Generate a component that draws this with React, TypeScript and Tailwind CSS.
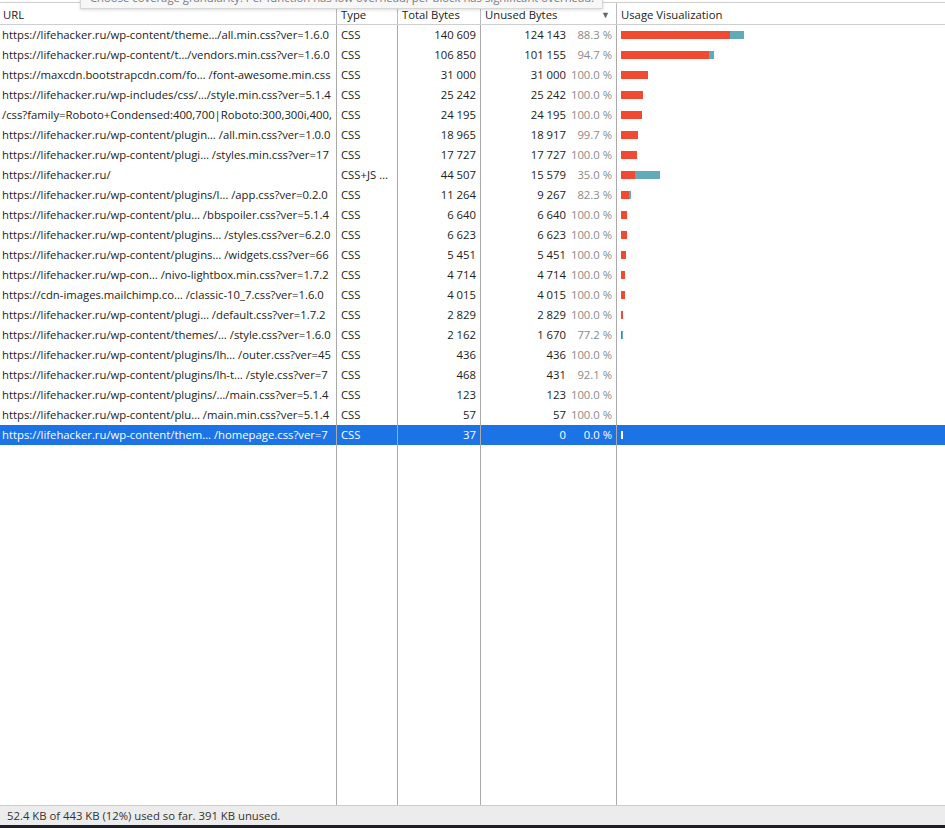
import React from "react";

type Row = { url: string; type: string; total: number; unused: number; pct: string };

const rows: Row[] = [
  { url: "https://lifehacker.ru/wp-content/theme…/all.min.css?ver=1.6.0", type: "CSS", total: 140609, unused: 124143, pct: "88.3 %" },
  { url: "https://lifehacker.ru/wp-content/t…/vendors.min.css?ver=1.6.0", type: "CSS", total: 106850, unused: 101155, pct: "94.7 %" },
  { url: "https://maxcdn.bootstrapcdn.com/fo… /font-awesome.min.css", type: "CSS", total: 31000, unused: 31000, pct: "100.0 %" },
  { url: "https://lifehacker.ru/wp-includes/css/…/style.min.css?ver=5.1.4", type: "CSS", total: 25242, unused: 25242, pct: "100.0 %" },
  { url: "/css?family=Roboto+Condensed:400,700|Roboto:300,300i,400,", type: "CSS", total: 24195, unused: 24195, pct: "100.0 %" },
  { url: "https://lifehacker.ru/wp-content/plugin… /all.min.css?ver=1.0.0", type: "CSS", total: 18965, unused: 18917, pct: "99.7 %" },
  { url: "https://lifehacker.ru/wp-content/plugi… /styles.min.css?ver=17", type: "CSS", total: 17727, unused: 17727, pct: "100.0 %" },
  { url: "https://lifehacker.ru/", type: "CSS+JS …", total: 44507, unused: 15579, pct: "35.0 %" },
  { url: "https://lifehacker.ru/wp-content/plugins/l… /app.css?ver=0.2.0", type: "CSS", total: 11264, unused: 9267, pct: "82.3 %" },
  { url: "https://lifehacker.ru/wp-content/plu… /bbspoiler.css?ver=5.1.4", type: "CSS", total: 6640, unused: 6640, pct: "100.0 %" },
  { url: "https://lifehacker.ru/wp-content/plugins… /styles.css?ver=6.2.0", type: "CSS", total: 6623, unused: 6623, pct: "100.0 %" },
  { url: "https://lifehacker.ru/wp-content/plugins… /widgets.css?ver=66", type: "CSS", total: 5451, unused: 5451, pct: "100.0 %" },
  { url: "https://lifehacker.ru/wp-con… /nivo-lightbox.min.css?ver=1.7.2", type: "CSS", total: 4714, unused: 4714, pct: "100.0 %" },
  { url: "https://cdn-images.mailchimp.co… /classic-10_7.css?ver=1.6.0", type: "CSS", total: 4015, unused: 4015, pct: "100.0 %" },
  { url: "https://lifehacker.ru/wp-content/plugi… /default.css?ver=1.7.2", type: "CSS", total: 2829, unused: 2829, pct: "100.0 %" },
  { url: "https://lifehacker.ru/wp-content/themes/… /style.css?ver=1.6.0", type: "CSS", total: 2162, unused: 1670, pct: "77.2 %" },
  { url: "https://lifehacker.ru/wp-content/plugins/lh… /outer.css?ver=45", type: "CSS", total: 436, unused: 436, pct: "100.0 %" },
  { url: "https://lifehacker.ru/wp-content/plugins/lh-t… /style.css?ver=7", type: "CSS", total: 468, unused: 431, pct: "92.1 %" },
  { url: "https://lifehacker.ru/wp-content/plugins/…/main.css?ver=5.1.4", type: "CSS", total: 123, unused: 123, pct: "100.0 %" },
  { url: "https://lifehacker.ru/wp-content/plu… /main.min.css?ver=5.1.4", type: "CSS", total: 57, unused: 57, pct: "100.0 %" },
  { url: "https://lifehacker.ru/wp-content/them… /homepage.css?ver=7", type: "CSS", total: 37, unused: 0, pct: "0.0 %" },
];

const fmt = (n: number) => n.toString().replace(/\B(?=(\d{3})+(?!\d))/g, " ");
const SCALE = 123 / 140609;

function Bar({ r, selected }: { r: Row; selected: boolean }) {
  if (selected) {
    return <div className="h-[8px] w-[2px] bg-white" />;
  }
  const total = r.total * SCALE;
  const red = r.unused * SCALE;
  const used = total - red;
  const redW = red >= 0.5 ? Math.max(1, Math.round(red)) : 0;
  const usedW = used >= 0.4 ? Math.max(1, Math.round(used)) : 0;
  return (
    <div className="flex h-[8px]">
      {redW > 0 && <div className="h-full bg-[#f14a32]" style={{ width: redW }} />}
      {usedW > 0 && <div className="h-full bg-[#62a9ba]" style={{ width: usedW }} />}
    </div>
  );
}

export default function App() {
  const cols = "grid grid-cols-[336px_61px_83px_136px_1fr]";
  return (
    <div
      className="relative w-[945px] h-[828px] bg-white overflow-hidden text-[11.3px] text-[#222]"
      style={{ fontFamily: '"Open Sans", "Noto Sans", sans-serif' }}
    >
      <div className="flex flex-col h-full">
        <div className="h-[2px]" />
        {/* header */}
        <div className={`${cols} h-[23px] border-t border-b border-[#cfcfcf]`}>
          <div className="pl-[3px] pt-[3px] flex items-center">URL</div>
          <div className="pl-[4px] pt-[3px] flex items-center border-l border-[#bbb]">Type</div>
          <div className="pl-[4px] pt-[3px] flex items-center border-l border-[#bbb]">Total Bytes</div>
          <div className="pl-[4px] pr-[6px] pt-[3px] flex items-center justify-between border-l border-[#bbb]">
            <span>Unused Bytes</span>
            <span className="text-[9px] text-[#666]">▼</span>
          </div>
          <div className="pl-[4px] pt-[3px] flex items-center border-l border-[#bbb]">Usage Visualization</div>
        </div>
        {/* rows */}
        {rows.map((r, i) => {
          const sel = i === rows.length - 1;
          return (
            <div
              key={i}
              className={`${cols} h-[20px] whitespace-nowrap ${sel ? "bg-[#1b73e6] text-white" : ""}`}
            >
              <div className="pl-[2px] flex items-center overflow-hidden">{r.url}</div>
              <div className="pl-[4px] flex items-center border-l border-[#aaa]">{r.type}</div>
              <div className="pr-[4px] flex items-center justify-end border-l border-[#aaa]">{fmt(r.total)}</div>
              <div className="pr-[4px] flex items-center justify-end border-l border-[#aaa]">
                <span>{fmt(r.unused)}</span>
                <span className={`w-[46px] text-right ${sel ? "text-white" : "text-[#8a8a8a]"}`}>{r.pct}</span>
              </div>
              <div className="pl-[4px] flex items-center border-l border-[#aaa]">
                <Bar r={r} selected={sel} />
              </div>
            </div>
          );
        })}
        {/* filler */}
        <div className={`${cols} flex-1`}>
          <div />
          <div className="border-l border-[#aaa]" />
          <div className="border-l border-[#aaa]" />
          <div className="border-l border-[#aaa]" />
          <div className="border-l border-[#aaa]" />
        </div>
        {/* status bar */}
        <div className="h-[20px] border-t border-[#cccccc] bg-[#ececec] flex items-center pt-[2px] pl-[7px] text-[#333]">
          52.4 KB of 443 KB (12%) used so far. 391 KB unused.
        </div>
        <div className="h-[3px] bg-[#1e1d28]" />
      </div>
      {/* tooltip */}
      <div className="absolute left-[80px] top-[-12px] w-[523px] h-[21px] bg-[#f7f7f7] border border-[#d6d6d6] shadow-[0_1px_3px_rgba(0,0,0,0.15)] flex items-center pl-[9px] text-[#7a7a7a] whitespace-nowrap overflow-hidden">
        Choose coverage granularity. Per function has low overhead, per block has significant overhead.
      </div>
    </div>
  );
}
